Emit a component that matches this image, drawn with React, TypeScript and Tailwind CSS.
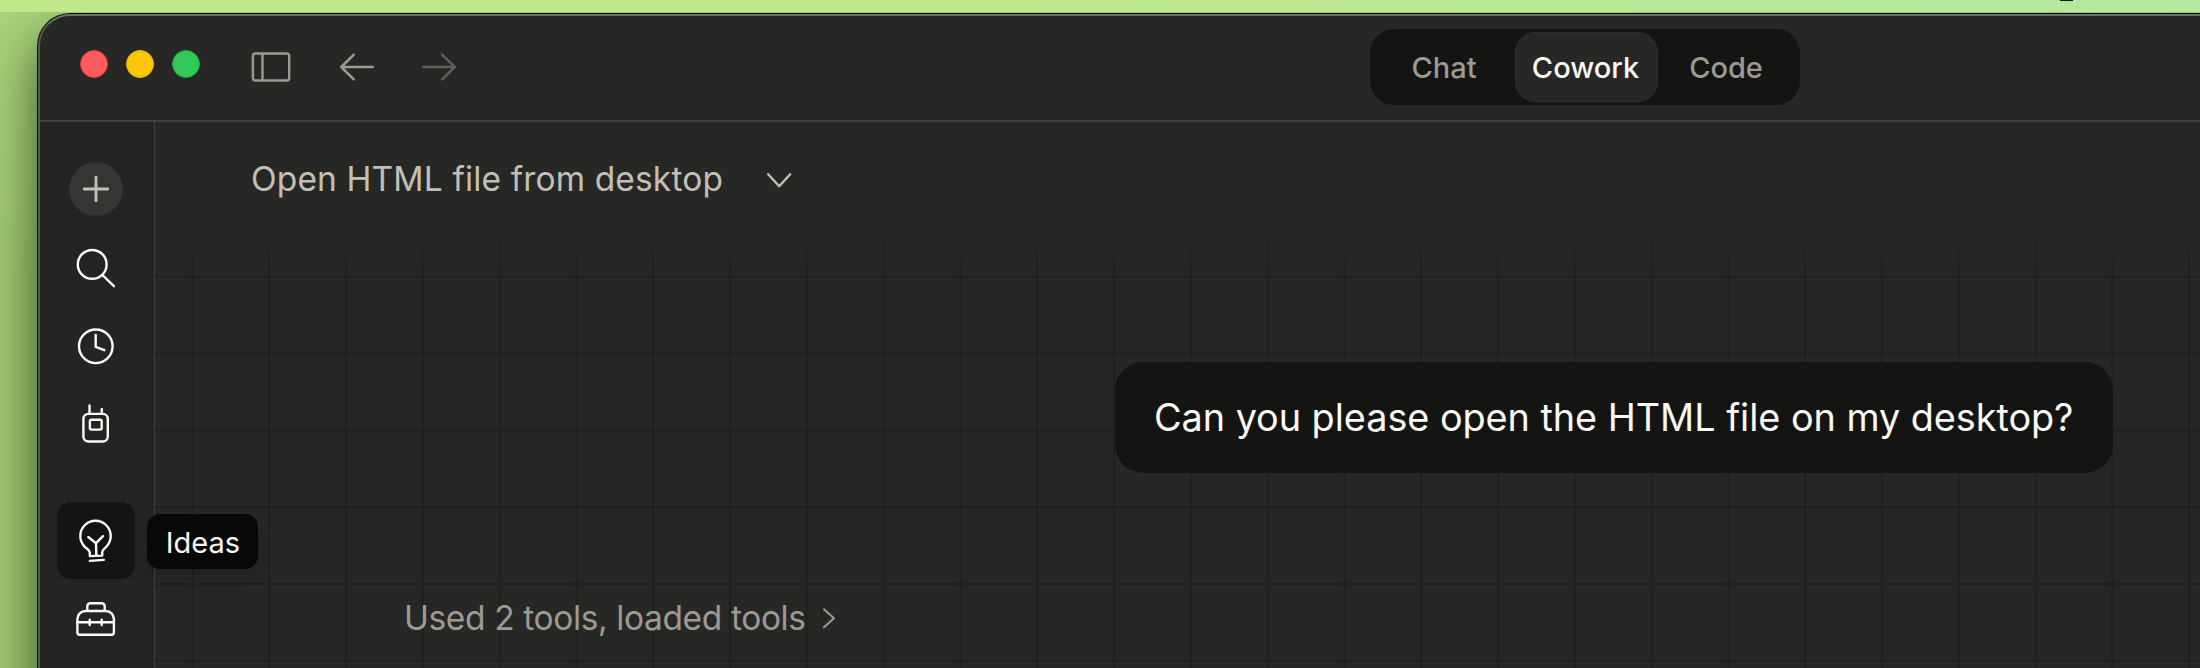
import type { ReactNode } from "react";

type RailIconProps = {
  children: ReactNode;
};

type Tab = {
  label: string;
  active?: boolean;
  className: string;
};

const TABS: Tab[] = [
  { label: "Chat", className: "w-[141px] pr-px" },
  { label: "Cowork", active: true, className: "w-[143px] pr-[2px]" },
  { label: "Code", className: "w-[138px] pr-[2px]" },
];

function RailIcon({ children }: RailIconProps) {
  return (
    <svg
      className="size-12 shrink-0"
      viewBox="0 0 48 48"
      fill="none"
      stroke="currentColor"
      strokeWidth="2.4"
      strokeLinecap="round"
      strokeLinejoin="round"
    >
      {children}
    </svg>
  );
}

function TitleBar() {
  return (
    <header className="flex h-[106px] shrink-0 items-center border-b-2 border-[#3f3f3e] pl-10">
      {/* WINDOW CONTROLS */}
      <div className="mb-2 flex gap-[18px]">
        <span className="size-7 rounded-full border border-[#f0333c] bg-[#ff5c60]" />
        <span className="size-7 rounded-full border border-[#eeb90a] bg-[#fac800]" />
        <span className="size-7 rounded-full border border-[#1cab33] bg-[#34c759]" />
      </div>

      {/* NAVIGATION */}
      <div className="mb-[2px] ml-[51px] flex items-center text-[#9c9a92]">
        <svg className="h-[30px] w-10" viewBox="0 0 40 30" fill="none" stroke="currentColor" strokeWidth="2.4">
          <rect x="1.9" y="1.5" width="36.3" height="27" rx="2.5" />
          <path d="M11.5 1.5v27" />
        </svg>
        <svg
          className="ml-12 h-[30px] w-9"
          viewBox="0 0 36 30"
          fill="none"
          stroke="currentColor"
          strokeWidth="2.5"
          strokeLinecap="round"
          strokeLinejoin="round"
        >
          <path d="M33.8 15H2.2M14.8 2.7 2.2 15l12.6 12.3" />
        </svg>
        <svg
          className="ml-[46px] h-[30px] w-9 text-[#5f5e5a]"
          viewBox="0 0 36 30"
          fill="none"
          stroke="currentColor"
          strokeWidth="2.5"
          strokeLinecap="round"
          strokeLinejoin="round"
        >
          <path d="M2.2 15h31.6M21.2 2.7 33.8 15 21.2 27.3" />
        </svg>
      </div>

      {/* MODE SWITCH */}
      <nav className="mb-[2px] ml-[913px] flex h-[76px] w-[430px] items-center rounded-[24px] bg-[#141413] px-1">
        {TABS.map((tab) => (
          <button
            key={tab.label}
            className={`flex h-[70px] items-center justify-center pt-[2px] text-[29px] font-medium ${tab.className} ${
              tab.active
                ? "rounded-[20px] border border-[#2d2d2b] bg-[#272726] text-[#faf9f5]"
                : "text-[#9c9a92]"
            }`}
          >
            {tab.label}
          </button>
        ))}
      </nav>
    </header>
  );
}

function Rail() {
  return (
    <aside className="flex w-[115px] shrink-0 flex-col items-center border-r border-[#3e3e3c] bg-[#242423] pt-7 pr-[2px] text-[#faf9f5]">
      <div className="flex h-[78.7px] items-center">
        <div className="flex size-[54px] items-center justify-center rounded-full bg-[#353533] text-[#c2c0b6]">
          <svg className="size-8" viewBox="0 0 32 32" fill="none" stroke="currentColor" strokeWidth="2.9" strokeLinecap="round">
            <path d="M16 4.2v23.6M4.2 16h23.6" />
          </svg>
        </div>
      </div>

      {/* Search */}
      <div className="flex h-[78.7px] items-center">
        <RailIcon>
          <circle cx="20.2" cy="20.4" r="14.4" />
          <path d="m30.4 31 11.5 11.2" />
        </RailIcon>
      </div>

      {/* Scheduled */}
      <div className="flex h-[78.7px] items-center">
        <RailIcon>
          <circle cx="23.8" cy="23.3" r="16.8" />
          <path d="M23.7 12v11.8l8.6 3.4" />
        </RailIcon>
      </div>

      {/* Dispatch */}
      <div className="flex h-[78.7px] items-center">
        <RailIcon>
          <rect x="11.4" y="12.9" width="24.4" height="27.6" rx="5" />
          <rect x="17.9" y="18.8" width="11.8" height="9.8" rx="1.5" />
          <path d="M17.5 4.5v8.2M29.8 8v4.7" />
        </RailIcon>
      </div>

      {/* Ideas, with its tooltip floating over the canvas */}
      <div className="relative mt-[37px] flex h-[77px] w-[78px] items-center justify-center rounded-[14px] bg-[#141413]">
        <RailIcon>
          <path d="M17.8 40.1v-3.6c0-2.6-2.8-3.6-5-5.7a15.2 15.2 0 1 1 21.4 0c-2.2 2.1-4 3.2-4 5.7v3.1l-12.4.5Z" />
          <path d="m16.3 21 7.7 6.2 7-7M24 27.2l.3 12M17.8 44.9l14-1" />
        </RailIcon>
        <div className="absolute top-3 left-[90px] z-10 flex h-[55px] w-[111px] items-center justify-center rounded-[13px] bg-[#080808] pt-[2px] pl-px text-[29px] text-[#faf9f5] shadow-lg">
          Ideas
        </div>
      </div>

      {/* Toolbox */}
      <div className="flex h-[78.7px] items-center pt-px">
        <RailIcon>
          <path d="M5.4 37.6V24a8 8 0 0 1 8-8h20.5a8 8 0 0 1 8 8v13.6a2.2 2.2 0 0 1-2.2 2.2H7.6a2.2 2.2 0 0 1-2.2-2.2Z" />
          <path d="M15.3 15.6v-4.4a3 3 0 0 1 3-3h11.4a3 3 0 0 1 3 3v4.4M5.4 27.3h36.4M17.7 24.8V30M29.7 24.8V30" />
        </RailIcon>
      </div>
    </aside>
  );
}

function Conversation() {
  return (
    <main className="flex flex-1 flex-col bg-[#272725] bg-[linear-gradient(#272725_110px,transparent_155px),linear-gradient(to_right,#1f1f1e_2px,transparent_2px),linear-gradient(#1f1f1e_2px,transparent_2px)] bg-[size:100%_100%,76.8px_76.8px,76.8px_76.8px] bg-[position:0_0,36.4px_0,0_0.2px]">
      <div className="flex h-[114px] shrink-0 items-center pl-24 text-[#c2c0b6]">
        <h1 className="w-[514px] text-[33.5px] tracking-[0.14px] whitespace-nowrap">Open HTML file from desktop</h1>
        <svg
          className="mt-[2px] h-[18px] w-7"
          viewBox="0 0 28 18"
          fill="none"
          stroke="currentColor"
          strokeWidth="2.4"
          strokeLinecap="round"
          strokeLinejoin="round"
        >
          <path d="m3.2 3.2 11 12 11-12" />
        </svg>
      </div>

      <div className="mt-[126px] mr-[87px] flex h-[111px] w-[998px] shrink-0 items-center self-end rounded-[28px] bg-[#141413] pl-[39px]">
        <p className="text-[37.8px] tracking-[-0.04px] whitespace-nowrap text-[#faf9f5]">
          Can you please open the HTML file on my desktop?
        </p>
      </div>

      <div className="mt-[121px] flex h-12 shrink-0 items-center pl-[249px] text-[#9c9a92]">
        <span className="w-[416px] text-[33.5px] tracking-[-0.38px] whitespace-nowrap">
          Used 2 tools, loaded tools
        </span>
        <svg
          className="h-6 w-4"
          viewBox="0 0 16 24"
          fill="none"
          stroke="currentColor"
          strokeWidth="2"
          strokeLinecap="round"
          strokeLinejoin="round"
        >
          <path d="m4 3.3 10 9-10 9" />
        </svg>
      </div>
    </main>
  );
}

export default function App() {
  return (
    <div className="flex h-[668px] w-[2200px] flex-col overflow-hidden bg-[#a3cf76] font-['Inter',sans-serif]">
      <div className="relative z-10 h-3 shrink-0 bg-linear-to-r from-[#bfe888] from-40% to-[#b3e99f]">
        <div className="ml-[2060px] h-px w-[13px] bg-[#1a1320]" />
      </div>
      <div className="flex flex-1 bg-linear-to-b from-[#a6d27a] to-[#9cc770] to-35% pt-[2px] pl-[38px]">
        <div className="flex h-[760px] flex-1 flex-col overflow-hidden rounded-tl-[32px] border-t-2 border-l-2 border-t-[#6d6f6d] border-l-[#575755] bg-[#272725] shadow-[0_0_0_1px_#0a0f06,0_24px_50px_rgba(0,0,0,0.6)]">
          <TitleBar />
          <div className="flex flex-1">
            <Rail />
            <Conversation />
          </div>
        </div>
      </div>
    </div>
  );
}
